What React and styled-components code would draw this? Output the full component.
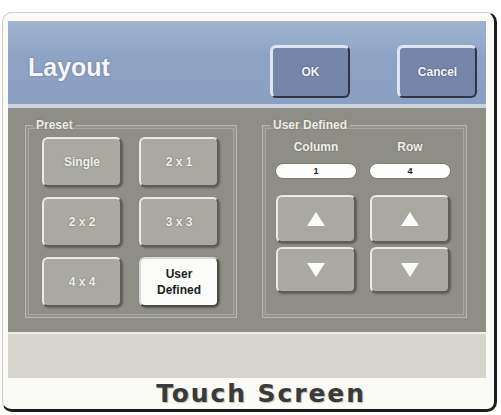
import styled, { createGlobalStyle } from "styled-components";

const GlobalStyle = createGlobalStyle`
  body {
    margin: 0;
    background: #ffffff;
    font-family: "Liberation Sans", Arial, sans-serif;
  }
`;

const Frame = styled.div`
  box-sizing: border-box;
  width: 495px;
  height: 400px;
  margin: 12px 0 0 2px;
  padding: 8px 8px 0 5px;
  display: flex;
  flex-direction: column;
  background: #fafaf7;
  border: 1px solid #cfcfc8;
  border-right: 3px solid #1c1c1c;
  border-bottom: 3px solid #1c1c1c;
  border-radius: 10px;
`;

const Header = styled.div`
  box-sizing: border-box;
  height: 87px;
  padding: 0 9px 0 20px;
  display: flex;
  align-items: flex-start;
  background: linear-gradient(180deg, #a0b3d0 0%, #8ea2c4 45%, #8a9fc1 100%);
  border-bottom: 4px solid #cfd4da;
`;

const Title = styled.h1`
  margin: 32px 0 0;
  font-size: 25px;
  line-height: 29px;
  font-weight: 700;
  color: #f6f8fb;
  text-shadow: 0 0 2px rgba(60, 75, 100, 0.6);
`;

const Actions = styled.div`
  margin-left: auto;
  padding-top: 24px;
  display: flex;
  gap: 47px;
`;

const BlueButton = styled.button`
  box-sizing: border-box;
  width: 80px;
  height: 53px;
  padding: 0;
  font-family: inherit;
  font-size: 12px;
  font-weight: 700;
  color: #f4f6fa;
  text-shadow: 0 0 2px #3d4a63;
  background: #7487ab;
  border: 3px solid #dfe5ee;
  border-right: 2px solid #2f3542;
  border-bottom: 2px solid #2f3542;
  border-radius: 6px;
`;

const Body = styled.div`
  box-sizing: border-box;
  height: 224px;
  padding: 10px 19px 14px 17px;
  display: flex;
  gap: 25px;
  background: #8f8e86;
`;

const Group = styled.fieldset`
  box-sizing: border-box;
  width: ${({ $width }) => $width}px;
  margin: 0;
  padding: 0;
  min-width: 0;
  border: 1px solid #b9b8b0;
  box-shadow: inset 0 0 0 2px #96958d, inset 0 0 0 3px #a9a8a0;
`;

const Legend = styled.legend`
  margin-left: 7px;
  padding: 0 3px;
  font-size: 12px;
  line-height: 14px;
  font-weight: 700;
  color: #eeede8;
  text-shadow: 0 0 2px #6a6961;
`;

const PresetGrid = styled.div`
  padding: 5px 0 0 16px;
  display: grid;
  grid-template-columns: 80px 80px;
  grid-auto-rows: 50px;
  column-gap: 17px;
  row-gap: 10px;
`;

const GrayButton = styled.button`
  box-sizing: border-box;
  width: ${({ $width }) => $width || 80}px;
  height: ${({ $height }) => $height || 50}px;
  padding: 0;
  display: flex;
  align-items: center;
  justify-content: center;
  font-family: inherit;
  font-size: 12px;
  line-height: 16px;
  font-weight: 700;
  color: #f0efea;
  text-shadow: 0 0 2px #6a6962;
  background: #aaa9a1;
  border: 2px solid #ebeae4;
  border-right-color: #5f5e56;
  border-bottom-color: #5f5e56;
  border-radius: 6px;
  box-shadow: 1px 1px 2px rgba(0, 0, 0, 0.35);
`;

const SelectedButton = styled(GrayButton)`
  color: #1e1e1e;
  text-shadow: none;
  background: #fbfbf9;
  border-color: #d8d8d2 #4a4a44 #4a4a44 #d8d8d2;
`;

const UserGrid = styled.div`
  padding: 0 0 0 12px;
  display: grid;
  grid-template-columns: 82px 82px;
  column-gap: 12px;
`;

const Column = styled.div`
  display: flex;
  flex-direction: column;
  align-items: center;
`;

const ColumnLabel = styled.div`
  margin-top: 8px;
  font-size: 12px;
  line-height: 14px;
  font-weight: 700;
  color: #efeee9;
  text-shadow: 0 0 2px #6a6961;
`;

const Value = styled.div`
  box-sizing: border-box;
  width: 82px;
  height: 16px;
  margin: 9px 0 16px;
  font-size: 9px;
  line-height: 14px;
  font-weight: 700;
  text-align: center;
  color: #222;
  background: #fdfdfb;
  border: 1px solid #7a7a72;
  border-radius: 8px;
`;

const Steppers = styled.div`
  display: flex;
  flex-direction: column;
  gap: 4px;
`;

const Arrow = styled.span`
  width: 0;
  height: 0;
  border-left: 9px solid transparent;
  border-right: 9px solid transparent;
  ${({ $dir }) =>
    $dir === "up"
      ? "border-bottom: 14px solid #fbfbf9;"
      : "border-top: 14px solid #fbfbf9;"}
`;

const Tray = styled.div`
  box-sizing: border-box;
  height: 46px;
  background: #d6d4cc;
  border-top: 2px solid #efeee9;
`;

const Caption = styled.div`
  height: 31px;
  padding-left: 28px;
  text-align: center;
  font-family: "DejaVu Sans", "Liberation Sans", sans-serif;
  font-size: 25px;
  line-height: 31px;
  font-weight: 700;
  letter-spacing: 1.9px;
  color: #3a3a3a;
  text-shadow: 1px 1px 1px rgba(0, 0, 0, 0.25);
`;

const presets = ["Single", "2 x 1", "2 x 2", "3 x 3", "4 x 4"];

const counters = [
  { label: "Column", value: 1 },
  { label: "Row", value: 4 },
];

const App = () => {
  return (
    <>
      <GlobalStyle />
      <Frame>
        <Header>
          <Title>Layout</Title>
          <Actions>
            <BlueButton>OK</BlueButton>
            <BlueButton>Cancel</BlueButton>
          </Actions>
        </Header>

        <Body>
          <Group $width={212}>
            <Legend>Preset</Legend>
            <PresetGrid>
              {presets.map((name) => (
                <GrayButton key={name}>{name}</GrayButton>
              ))}
              <SelectedButton>
                User
                <br />
                Defined
              </SelectedButton>
            </PresetGrid>
          </Group>

          <Group $width={205}>
            <Legend>User Defined</Legend>
            <UserGrid>
              {counters.map(({ label, value }) => (
                <Column key={label}>
                  <ColumnLabel>{label}</ColumnLabel>
                  <Value>{value}</Value>
                  <Steppers>
                    <GrayButton $height={48}>
                      <Arrow $dir="up" />
                    </GrayButton>
                    <GrayButton $height={46}>
                      <Arrow $dir="down" />
                    </GrayButton>
                  </Steppers>
                </Column>
              ))}
            </UserGrid>
          </Group>
        </Body>

        <Tray />
        <Caption>Touch Screen</Caption>
      </Frame>
    </>
  );
};

export default App;
